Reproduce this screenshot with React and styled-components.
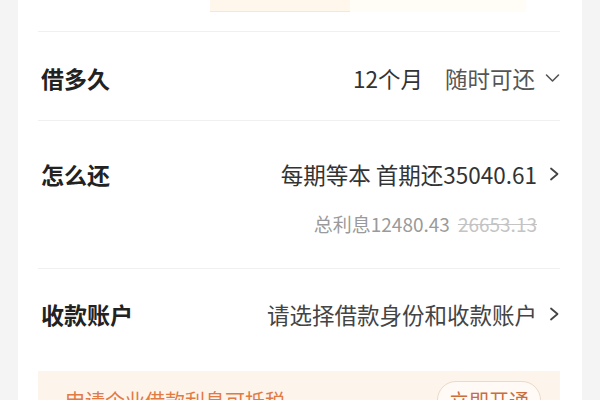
import styled, { createGlobalStyle } from 'styled-components';

const GlobalStyle = createGlobalStyle`
  body {
    margin: 0;
    background: #f4f4f4;
    font-family: "Noto Sans CJK SC", "Noto Sans", sans-serif;
  }
`;

function ChevronRight() {
  return (
    <svg width="11" height="14" viewBox="0 0 11 14" fill="none">
      <polyline points="2,1.5 8.5,7 2,12.5" stroke="#444" strokeWidth="1.8" strokeLinecap="round" strokeLinejoin="round" />
    </svg>
  );
}

function ChevronDown() {
  return (
    <svg width="15" height="10" viewBox="0 0 15 10" fill="none">
      <polyline points="1.5,2 7.5,8 13.5,2" stroke="#555" strokeWidth="1.6" strokeLinecap="round" strokeLinejoin="round" />
    </svg>
  );
}

function App() {
  return (
    <>
      <GlobalStyle />
      <Page>
        <Card>
          <TopStrip>
            <Highlight />
            <HighlightTail />
          </TopStrip>

          <Row $top={31} $height={89}>
            <Label>借多久</Label>
            <Value>
              <Text $color="#333">12个月</Text>
              <Text $color="#555" $gap={22}>随时可还</Text>
              <Icon $gap={10}><ChevronDown /></Icon>
            </Value>
          </Row>

          <Row $top={38} $height={148} $column>
            <Line>
              <Label>怎么还</Label>
              <Value>
                <Text $color="#333">每期等本 首期还35040.61</Text>
                <Icon $gap={12}><ChevronRight /></Icon>
              </Value>
            </Line>
            <SubLine>
              <SubText>总利息12480.43</SubText>
              <Struck>26653.13</Struck>
            </SubLine>
          </Row>

          <Row $top={30} $height={103}>
            <Label>收款账户</Label>
            <Value>
              <Text $color="#444">请选择借款身份和收款账户</Text>
              <Icon $gap={12}><ChevronRight /></Icon>
            </Value>
          </Row>

          <Banner>
            <BannerText>申请企业借款利息可抵税</BannerText>
            <OpenButton>立即开通</OpenButton>
          </Banner>
        </Card>
      </Page>
    </>
  );
}

const Page = styled.div`
  height: 400px;
  overflow: hidden;
  padding: 0 18px;
`;

const Card = styled.div`
  background: #fff;
  padding: 0 22px 0 20px;
  min-height: 430px;
`;

const TopStrip = styled.div`
  height: 31px;
  display: flex;
  align-items: flex-start;
  padding-left: 172px;
`;

const Highlight = styled.div`
  width: 140px;
  height: 11px;
  background: #fff7ec;
  border-bottom: 1px solid #fde6c8;
`;

const HighlightTail = styled.div`
  width: 176px;
  height: 12px;
  background: #fffdf6;
`;

const Row = styled.div`
  box-sizing: border-box;
  height: ${p => p.$height}px;
  padding-top: ${p => p.$top}px;
  border-top: 1px solid #f0f0f0;
  display: flex;
  flex-direction: ${p => (p.$column ? 'column' : 'row')};
  justify-content: ${p => (p.$column ? 'flex-start' : 'space-between')};
  align-items: ${p => (p.$column ? 'stretch' : 'flex-start')};
`;

const Line = styled.div`
  display: flex;
  justify-content: space-between;
  align-items: center;
`;

const Label = styled.div`
  font-size: 23px;
  line-height: 30px;
  font-weight: 700;
  color: #222;
  padding-left: 3px;
`;

const Value = styled.div`
  display: flex;
  align-items: center;
  height: 30px;
`;

const Text = styled.span`
  font-size: 22.5px;
  line-height: 30px;
  color: ${p => p.$color};
  margin-left: ${p => p.$gap || 0}px;
`;

const Icon = styled.span`
  display: flex;
  align-items: center;
  margin-left: ${p => p.$gap}px;
`;

const SubLine = styled.div`
  display: flex;
  justify-content: flex-end;
  align-items: center;
  margin-top: 22px;
  padding-right: 23px;
  line-height: 26px;
  font-size: 19px;
`;

const SubText = styled.span`
  color: #9a9a9a;
`;

const Struck = styled.span`
  color: #c4c4c4;
  margin-left: 8px;
  text-decoration: line-through;
`;

const Banner = styled.div`
  display: flex;
  justify-content: space-between;
  align-items: center;
  background: #fdf4ec;
  padding: 10px 19px 10px 27px;
`;

const BannerText = styled.span`
  font-size: 20px;
  color: #e27a43;
`;

const OpenButton = styled.button`
  box-sizing: border-box;
  width: 104px;
  height: 38px;
  border: 1px solid #ecd9c9;
  border-radius: 19px;
  background: #fffaf6;
  color: #c96d3d;
  font-family: inherit;
  font-size: 20px;
  padding: 0;
`;

export default App;
